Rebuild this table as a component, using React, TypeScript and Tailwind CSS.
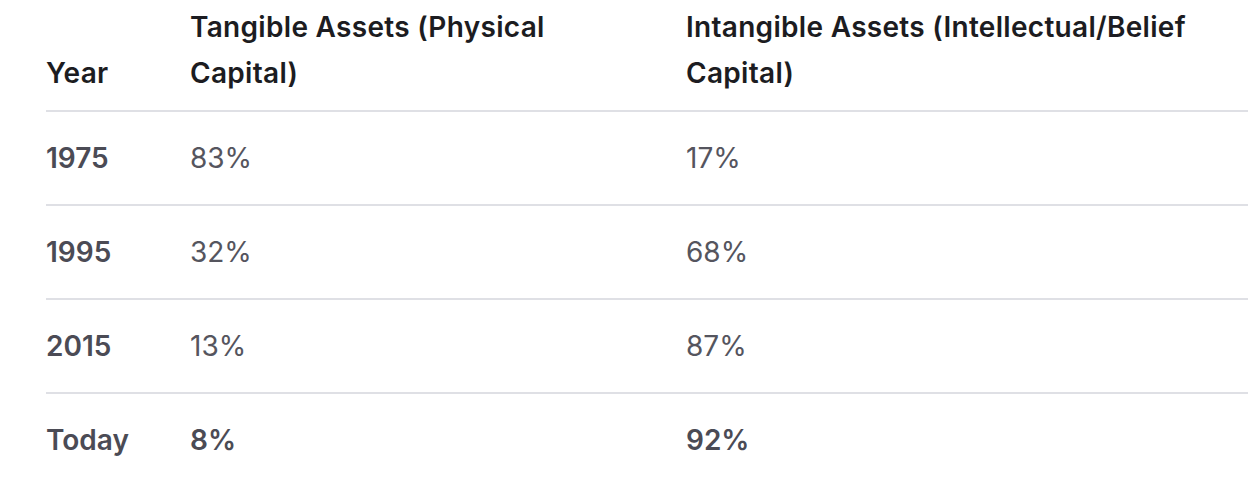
const rows = [
  { year: '1975', tangible: '83%', intangible: '17%' },
  { year: '1995', tangible: '32%', intangible: '68%' },
  { year: '2015', tangible: '13%', intangible: '87%' },
  { year: 'Today', tangible: '8%', intangible: '92%', strong: true },
];

export default function App() {
  return (
    <div className="min-h-[494px] w-full overflow-hidden bg-white pl-[46px] font-['Inter',sans-serif] text-[28px]">
      <div className="grid grid-cols-[144px_496px_1fr]">
        {/* Header */}
        <div className="flex h-[110px] items-end pb-[14px] font-semibold leading-[46px] tracking-[0.3px] text-[#1c1c21]">
          Year
        </div>
        <div className="flex h-[110px] items-end pb-[14px] font-semibold leading-[46px] tracking-[0.3px] text-[#1c1c21]">
          <span>
            Tangible Assets (Physical
            <br />
            Capital)
          </span>
        </div>
        <div className="flex h-[110px] items-end pb-[14px] font-semibold leading-[46px] tracking-[0.3px] text-[#1c1c21]">
          <span>
            Intangible Assets (Intellectual/Belief
            <br />
            Capital)
          </span>
        </div>

        {/* Body */}
        {rows.map((row) => (
          <div key={row.year} className="contents">
            <div className="flex h-[94px] items-center border-t-2 border-[#dfe0e5] font-semibold text-[#4b4b55]">
              {row.year}
            </div>
            <div
              className={`flex h-[94px] items-center border-t-2 border-[#dfe0e5] ${
                row.strong ? 'font-semibold text-[#4b4b55]' : 'font-normal text-[#55555e]'
              }`}
            >
              {row.tangible}
            </div>
            <div
              className={`flex h-[94px] items-center border-t-2 border-[#dfe0e5] ${
                row.strong ? 'font-semibold text-[#4b4b55]' : 'font-normal text-[#55555e]'
              }`}
            >
              {row.intangible}
            </div>
          </div>
        ))}
      </div>
    </div>
  );
}
